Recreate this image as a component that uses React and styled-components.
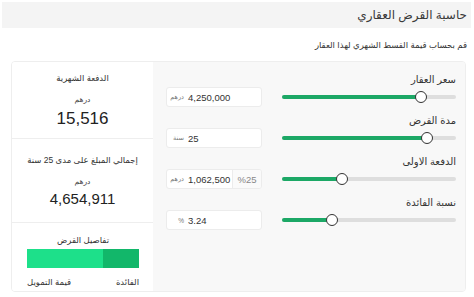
import React from "react";
import styled, { createGlobalStyle } from "styled-components";

const GlobalStyle = createGlobalStyle`
  body {
    margin: 0;
    background: #fff;
    font-family: "Liberation Sans", "DejaVu Sans", sans-serif;
    color: #333;
  }
`;

const rows = [
  { label: "سعر العقار", value: "4,250,000", unit: "درهم", pct: 80 },
  { label: "مدة القرض", value: "25", unit: "سنة", pct: 83.5 },
  { label: "الدفعة الاولى", value: "1,062,500", unit: "درهم", pct: 34.5, side: "%25" },
  { label: "نسبة الفائدة", value: "3.24", unit: "%", pct: 28.5 },
];

function Slider({ pct }) {
  return (
    <Track>
      <Fill style={{ width: `${pct}%` }} />
      <Thumb style={{ left: `${pct}%` }} />
    </Track>
  );
}

function App() {
  return (
    <Page>
      <GlobalStyle />
      <Header>حاسبة القرض العقاري</Header>
      <Intro>قم بحساب قيمة القسط الشهري لهذا العقار</Intro>
      <Calculator>
        <Inputs>
          {rows.map((r) => (
            <Row key={r.label}>
              <Label>{r.label}</Label>
              <Controls>
                <Slider pct={r.pct} />
                <InputBox>
                  <Field>
                    <Unit>{r.unit}</Unit>
                    <Value>{r.value}</Value>
                  </Field>
                  {r.side && <Side>{r.side}</Side>}
                </InputBox>
              </Controls>
            </Row>
          ))}
        </Inputs>
        <Summary>
          <Section>
            <Caption>الدفعة الشهرية</Caption>
            <Currency>درهم</Currency>
            <Amount big>15,516</Amount>
          </Section>
          <Section total>
            <Caption>إجمالي المبلغ على مدى 25 سنة</Caption>
            <Currency>درهم</Currency>
            <Amount>4,654,911</Amount>
          </Section>
          <Details>
            <Caption>تفاصيل القرض</Caption>
            <Bar>
              <Part dark style={{ width: "32%" }} />
              <Part />
            </Bar>
            <Legend>
              <span>الفائدة</span>
              <span>قيمة التمويل</span>
            </Legend>
          </Details>
        </Summary>
      </Calculator>
    </Page>
  );
}

export default App;

const Page = styled.div`
  direction: rtl;
  width: 474px;
  height: 297px;
  overflow: hidden;
`;

const Header = styled.div`
  margin: 2px 3px 0 2px;
  height: 26px;
  background: #f4f4f4;
  display: flex;
  align-items: center;
  padding: 0 4px;
  font-size: 12px;
  color: #3a3a3a;
`;

const Intro = styled.div`
  margin: 10px 7px 0 0;
  font-size: 8.5px;
  line-height: 14px;
  color: #333;
`;

const Calculator = styled.div`
  margin: 9px 8px 0 11px;
  height: 231px;
  display: flex;
  border: 1px solid #eee;
  border-radius: 4px;
  overflow: hidden;
  box-sizing: border-box;
`;

const Inputs = styled.div`
  flex: 1;
  background: #f8f8f8;
  padding: 11px 9px 0 13px;
`;

const Row = styled.div`
  margin-bottom: 7px;
`;

const Label = styled.div`
  font-size: 10px;
  line-height: 14px;
  color: #333;
`;

const Controls = styled.div`
  display: flex;
  align-items: center;
  justify-content: space-between;
`;

const Track = styled.div`
  position: relative;
  direction: ltr;
  width: 174px;
  height: 4px;
  border-radius: 2px;
  background: #dedede;
`;

const Fill = styled.div`
  height: 100%;
  border-radius: 2px;
  background: #1ca866;
`;

const Thumb = styled.div`
  position: absolute;
  top: 50%;
  width: 12px;
  height: 12px;
  margin: -6px 0 0 -6px;
  box-sizing: border-box;
  border-radius: 50%;
  border: 1.3px solid #333;
  background: #fff;
`;

const InputBox = styled.div`
  direction: ltr;
  width: 96px;
  height: 20px;
  box-sizing: border-box;
  display: flex;
  background: #fff;
  border: 1px solid #ececec;
  border-radius: 3px;
  overflow: hidden;
`;

const Field = styled.div`
  flex: 1;
  display: flex;
  align-items: center;
  padding-left: 1px;
`;

const Unit = styled.span`
  width: 16px;
  text-align: right;
  font-size: 6.5px;
  color: #777;
`;

const Value = styled.span`
  margin-left: 4px;
  font-size: 9.5px;
  color: #333;
`;

const Side = styled.div`
  width: 28px;
  display: flex;
  align-items: center;
  justify-content: center;
  border-left: 1px solid #ececec;
  background: #fafafa;
  font-size: 9.5px;
  color: #888;
`;

const Summary = styled.div`
  width: 141px;
  background: #fff;
  display: flex;
  flex-direction: column;
`;

const Section = styled.div`
  display: flex;
  flex-direction: column;
  align-items: center;
  padding: ${(p) => (p.total ? "15px 0 14px" : "10px 0 9px")};
  border-bottom: 1px solid #eee;
`;

const Caption = styled.div`
  font-size: 8.5px;
  line-height: 12px;
  color: #333;
`;

const Currency = styled.div`
  margin-top: 11px;
  font-size: 7.5px;
  line-height: 10px;
  color: #444;
`;

const Amount = styled.div`
  margin-top: ${(p) => (p.big ? "4px" : "3px")};
  font-size: ${(p) => (p.big ? "17px" : "15px")};
  line-height: ${(p) => (p.big ? "20px" : "18px")};
  color: #222;
`;

const Details = styled.div`
  display: flex;
  flex-direction: column;
  align-items: center;
  padding: 11px 14px 0 15px;
`;

const Bar = styled.div`
  margin-top: 3px;
  width: 100%;
  height: 19px;
  display: flex;
`;

const Part = styled.div`
  flex: ${(p) => (p.dark ? "none" : "1")};
  background: ${(p) => (p.dark ? "#12b76a" : "#1de08a")};
`;

const Legend = styled.div`
  margin-top: 8px;
  width: 100%;
  display: flex;
  justify-content: space-between;
  font-size: 8.5px;
  line-height: 12px;
  color: #333;
`;
